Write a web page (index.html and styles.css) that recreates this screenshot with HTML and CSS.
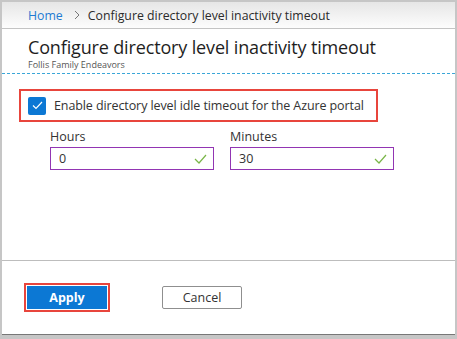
FILE: index.html
```html
<!DOCTYPE html>
<html lang="en">
<head>
    <meta charset="UTF-8">
    <title>Configure directory level inactivity timeout</title>
    <link rel="stylesheet" href="styles.css">
</head>
<body>
    <div class="blade">
        <!-- breadcrumb bar -->
        <div class="crumbs">
            <a class="crumb-link" href="#">Home</a>
            <span class="crumb-sep">
                <svg width="8" height="10" viewBox="0 0 8 10"><path d="M2 1 L6 5 L2 9" fill="none" stroke="#777" stroke-width="1"/></svg>
            </span>
            <span class="crumb-current">Configure directory level inactivity timeout</span>
        </div>

        <div class="blade-header">
            <h1>Configure directory level inactivity timeout</h1>
            <div class="subtitle">Follis Family Endeavors</div>
        </div>

        <div class="blade-content">
            <label class="enable-row">
                <span class="checkbox">
                    <svg width="11" height="9" viewBox="0 0 11 9"><path d="M1 4.5 L4 7.5 L10 1" fill="none" stroke="#fff" stroke-width="1.2"/></svg>
                </span>
                <span class="enable-text">Enable directory level idle timeout for the Azure portal</span>
            </label>

            <div class="fields">
                <div class="field">
                    <div class="field-label">Hours</div>
                    <div class="field-box">
                        <span class="field-value">0</span>
                        <svg class="valid" width="13" height="10" viewBox="0 0 13 10"><path d="M1 5 L5 9 L12 1" fill="none" stroke="#7ab648" stroke-width="1.2"/></svg>
                    </div>
                </div>
                <div class="field">
                    <div class="field-label">Minutes</div>
                    <div class="field-box">
                        <span class="field-value">30</span>
                        <svg class="valid" width="13" height="10" viewBox="0 0 13 10"><path d="M1 5 L5 9 L12 1" fill="none" stroke="#7ab648" stroke-width="1.2"/></svg>
                    </div>
                </div>
            </div>
        </div>

        <div class="blade-footer">
            <span class="highlight">
                <button class="btn btn-primary">Apply</button>
            </span>
            <button class="btn btn-default">Cancel</button>
        </div>
    </div>
</body>
</html>
```

FILE: styles.css
```css
body {
    margin: 0;
    padding: 0;
    background-color: #c6c6c6;
    font-family: "Open Sans", "Noto Sans", Arial, sans-serif;
    color: #222;
}

.blade {
    margin: 2px 2px 0 2px;
    height: 332px;
    background-color: white;
    border-bottom: 1px solid #777;
    display: flex;
    flex-direction: column;
}

/* Breadcrumb */
.crumbs {
    height: 26px;
    display: flex;
    align-items: center;
    padding-left: 26px;
    font-size: 12.3px;
    background: linear-gradient(#e6e6e6, #fdfdfd);
    border-bottom: 1px solid #c4c4c4;
}

.crumb-link {
    color: #1e7bd2;
    text-decoration: none;
}

.crumb-sep {
    display: flex;
    margin: 0 7px 0 10px;
}

.crumb-current {
    color: #2b2b2b;
}

/* Header */
.blade-header {
    padding: 6px 26px 0 26px;
    height: 38px;
    border-bottom: 1px dashed #3aa6d8;
}

h1 {
    margin: 0;
    font-size: 18px;
    font-weight: normal;
    color: #1e1e1e;
    line-height: 24px;
    letter-spacing: -0.15px;
}

.subtitle {
    font-size: 9px;
    color: #555;
    line-height: 11px;
}

/* Content */
.blade-content {
    flex: 1;
    padding: 15px 0 0 17px;
    border-bottom: 1px solid #bdbdbd;
}

.enable-row {
    display: inline-flex;
    align-items: center;
    width: 348px;
    height: 29px;
    border: 2px solid #e8453c;
    padding-left: 7px;
}

.checkbox {
    width: 18px;
    height: 18px;
    background-color: #0c78d4;
    border-radius: 2px;
    display: flex;
    align-items: center;
    justify-content: center;
    margin-right: 8px;
}

.enable-text {
    font-size: 12.5px;
    color: #333;
    letter-spacing: -0.1px;
}

.fields {
    display: flex;
    gap: 16px;
    padding-left: 31px;
    margin-top: 6px;
}

.field-label {
    font-size: 12.5px;
    color: #333;
    line-height: 18px;
    margin-bottom: 1px;
}

.field-box {
    width: 150px;
    height: 21px;
    border: 1px solid #9235b3;
    display: flex;
    align-items: center;
    justify-content: space-between;
    padding: 0 4px 0 8px;
}

.field-value {
    font-size: 12.5px;
    color: #333;
}

.valid {
    margin-right: 2px;
}

/* Footer */
.blade-footer {
    height: 73px;
    display: flex;
    align-items: flex-start;
    padding: 22px 0 0 22px;
    box-sizing: border-box;
}

.highlight {
    display: inline-block;
    border: 2px solid #e8453c;
    padding: 1px;
    margin-right: 52px;
}

.btn {
    font-family: "Open Sans", "Noto Sans", Arial, sans-serif;
    font-size: 12.5px;
    height: 23px;
    width: 80px;
    display: block;
    cursor: pointer;
}

.btn-primary {
    background-color: #0c78d4;
    color: white;
    border: none;
    font-weight: bold;
}

.btn-default {
    margin-top: 3px;
    background-color: white;
    color: #333;
    border: 1px solid #8f8f8f;
    border-radius: 2px;
}
```
